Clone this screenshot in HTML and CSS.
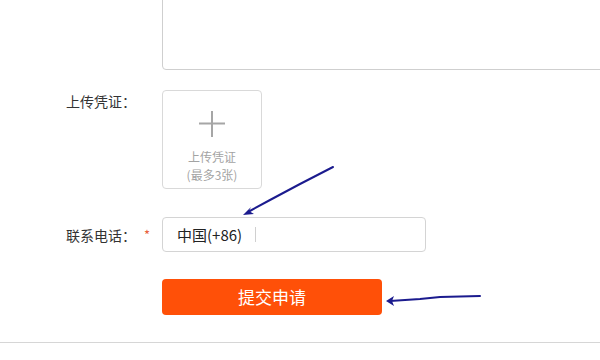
FILE: index.html
```html
<!DOCTYPE html>
<html lang="zh-CN">
<head>
<meta charset="utf-8">
<title>申请</title>
<link rel="stylesheet" href="styles.css">
</head>
<body>
<div class="page">
  <form class="form">
    <div class="row row-text">
      <div class="label"></div>
      <div class="mark"></div>
      <div class="textarea"></div>
    </div>
    <div class="row row-upload">
      <div class="label">上传凭证：</div>
      <div class="mark"></div>
      <div class="upload">
        <svg class="plus" width="26" height="26" viewBox="0 0 26 26"><path d="M0 12.5H26M13 0V26" stroke="#a6a6a6" stroke-width="2" fill="none"/></svg>
        <div class="upload-text">上传凭证</div>
        <div class="upload-text">(最多3张)</div>
      </div>
    </div>
    <div class="row row-phone">
      <div class="label">联系电话：</div>
      <div class="mark">*</div>
      <div class="phone">
        <span class="code">中国(+86)</span>
        <span class="sep"></span>
      </div>
    </div>
    <div class="row row-btn">
      <div class="label"></div>
      <div class="mark"></div>
      <div class="btn">提交申请</div>
    </div>
  </form>
  <div class="rule"></div>
  <svg class="notes" width="600" height="360" viewBox="0 0 600 360">
    <g stroke="#1b1b8e" stroke-width="2" fill="none" stroke-linecap="round">
      <path d="M333 167 L300 184 L270 200 L248 212"/>
      <path d="M480 296 L440 297 L420 299 L390 301"/>
    </g>
    <g fill="#1b1b8e">
      <path d="M243 215 L251 207 L249 211 L254 214 Z"/>
      <path d="M386 301 L394 296 L392 301 L394 306 Z"/>
    </g>
  </svg>
</div>
</body>
</html>
```

FILE: styles.css
```css
html, body {
  margin: 0;
  padding: 0;
  background: #fff;
}
body {
  font-family: "Microsoft YaHei", "Noto Sans CJK SC", "Noto Sans", sans-serif;
  color: #333;
  width: 600px;
  height: 360px;
  overflow: hidden;
}
.page {
  position: relative;
  width: 600px;
  height: 360px;
  overflow: hidden;
}
.form {
  display: flex;
  flex-direction: column;
  margin-top: -31px;
}
.row {
  display: flex;
  align-items: flex-start;
}
.label {
  width: 136px;
  flex: none;
  text-align: right;
  font-size: 14px;
  line-height: 20px;
  color: #333;
  white-space: nowrap;
}
.mark {
  width: 26px;
  flex: none;
  box-sizing: border-box;
  padding-left: 8px;
  color: #e8603c;
  font-size: 13px;
  line-height: 20px;
}
.textarea {
  width: 480px;
  height: 101px;
  box-sizing: border-box;
  border: 1px solid #cfcfcf;
  border-radius: 4px;
  flex: none;
}
.row-upload {
  margin-top: 20px;
}
.row-upload .label,
.row-upload .mark {
  padding-top: 1px;
}
.upload {
  width: 100px;
  height: 99px;
  box-sizing: border-box;
  border: 1px solid #d9d9d9;
  border-radius: 4px;
  display: flex;
  flex-direction: column;
  align-items: center;
  padding-top: 20px;
}
.plus {
  display: block;
  margin-bottom: 11px;
}
.upload-text {
  font-size: 12px;
  line-height: 18px;
  height: 18px;
  color: #a3a3a3;
  text-align: center;
  white-space: nowrap;
}
.row-phone {
  margin-top: 28px;
  align-items: center;
}
.phone {
  width: 264px;
  height: 35px;
  box-sizing: border-box;
  border: 1px solid #d4d4d4;
  border-radius: 4px;
  display: flex;
  align-items: center;
  padding-left: 14px;
}
.code {
  font-size: 15px;
  color: #222;
}
.sep {
  width: 1px;
  height: 15px;
  background: #d0d0d0;
  margin-left: 13px;
}
.row-btn {
  margin-top: 27px;
}
.btn {
  width: 220px;
  height: 36px;
  background: #ff5008;
  border-radius: 4px;
  color: #fff;
  font-size: 17px;
  line-height: 36px;
  text-align: center;
}
.rule {
  margin-top: 27px;
  height: 1px;
  background: #d6d6d6;
}
.notes {
  position: absolute;
  left: 0;
  top: 0;
  pointer-events: none;
}
```
